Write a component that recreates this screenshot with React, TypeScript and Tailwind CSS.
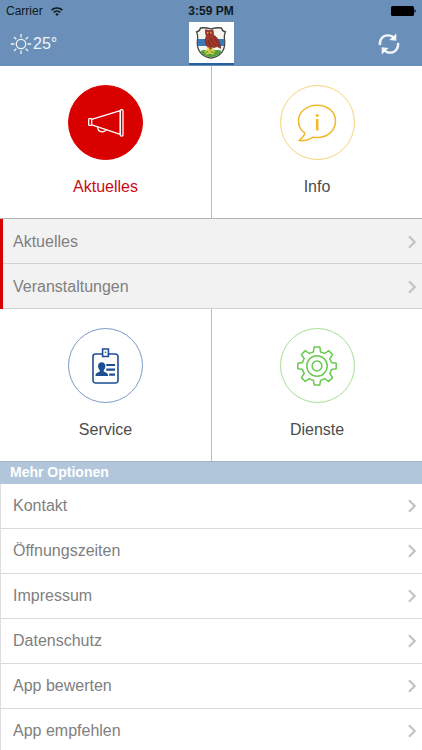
import React, { useState } from "react";

const newsLinks = ["Aktuelles", "Veranstaltungen"];

const moreLinks = [
  "Kontakt",
  "Öffnungszeiten",
  "Impressum",
  "Datenschutz",
  "App bewerten",
  "App empfehlen",
];

function Chevron() {
  return (
    <svg className="w-2 h-3.5 text-[#c4c4c8]" viewBox="0 0 8 14" fill="none" stroke="currentColor" strokeWidth={2.2}>
      <path d="M1 1.2l5.6 5.8L1 12.8" />
    </svg>
  );
}

function StatusBar() {
  return (
    <div className="grid grid-cols-3 items-center h-[22px] pl-1.5 pr-1.5 text-xs text-[#101820]">
      <div className="flex items-center gap-2">
        <span>Carrier</span>
        <svg className="w-3 h-[9px]" viewBox="0 0 12 9" fill="none" stroke="currentColor" strokeWidth={1.7}>
          <path d="M.6 3.2a7.7 7.7 0 0110.8 0M2.7 5.5a4.7 4.7 0 016.6 0" />
          <path d="M6 8.9L4.2 7.1a2.6 2.6 0 013.6 0z" fill="currentColor" stroke="none" />
        </svg>
      </div>
      <span className="text-center font-bold">3:59 PM</span>
      <svg className="justify-self-end w-[25px] h-2.5" viewBox="0 0 25 10" fill="black">
        <rect x="0" y="0" width="23" height="10" rx="1.5" />
        <path d="M23.500 3.200c1.600.2 1.600 3.400 0 3.600z" />
      </svg>
    </div>
  );
}

function SunIcon() {
  return (
    <svg className="w-[22px] h-[22px]" viewBox="0 0 22 22" fill="none" stroke="currentColor" strokeWidth={1.3}>
      <circle cx="11" cy="11" r="4.7" />
      <path d="M11 1v3.6M11 17.4V21M.8 11h3.6M17.6 11h3.6M3.9 3.9l2.4 2.4M15.7 15.7l2.4 2.4M3.9 18.1l2.4-2.4M15.7 6.3l2.4-2.4" />
    </svg>
  );
}

function RefreshIcon() {
  return (
    <svg className="w-[22px] h-[22px]" viewBox="0 0 22 22" fill="none" stroke="currentColor" strokeWidth={2.4}>
      <path d="M1.9 12.200C1.300 6.200 5 2.500 9.800 2.400c2.600-.1 4.700.9 6.200 2.700" />
      <path d="M18.300.6v7.200l-7-.8z" fill="currentColor" stroke="none" />
      <path d="M20.100 9.800c.6 6-3.100 9.700-7.900 9.800-2.600.1-4.700-.9-6.200-2.700" />
      <path d="M3.700 21.400v-7.200l7 .8z" fill="currentColor" stroke="none" />
    </svg>
  );
}

// Coat of arms: owl on a green mound over a blue and white shield
function Crest() {
  return (
    <svg className="w-8 h-8" viewBox="0 0 32 32">
      <path
        d="M5.500 1C8.500.4 12 .8 16 1.800 20 .8 23.500.4 26.500 1c.4 2 1.700 3.400 4 4-1.800 2.700-1.200 5.200-.9 8.500.9 9-3.600 15.500-13.600 17.700C6 29 1.500 22.500 2.400 13.500c.3-3.300.9-5.800-.9-8.500 2.300-.6 3.600-2 4-4z"
        fill="#f4f4f1"
        stroke="#45463f"
        strokeWidth={1.300}
      />
      <path d="M2.900 12h26.200c.3 2.600.3 4.800-.3 7H3.200c-.6-2.200-.6-4.400-.3-7z" fill="#3b78b8" />
      <path d="M5.300 24.500c2-1.500 4-1.800 6-1.200 3.500-1.200 7-1.200 9.500 0 2.300-.6 4.300-.3 5.900 1.200-2.200 3.200-5.700 5-10.700 6-5-1-8.500-2.800-10.700-6z" fill="#54a23f" />
      <path
        d="M10.800 2.600c1.700 1.200 4.600 1.300 6.900.1.900 1.900 1 3.700.5 5.400 4.200 1.700 6.400 6 7.600 13.200l-3.600-1.700-4.200 1.200-3 1.400c-4.300-3-5.800-8.200-3.600-13.400-1-2-1.200-4.100-.6-6.200z"
        fill="#a0392a"
        stroke="#6a2219"
        strokeWidth={0.700}
      />
      <path d="M17.800 9.500c2.600 2.300 4.600 5.500 6 9.700M15.500 11c1.200 3.300 3 6 5.500 8.300M13.200 13c.5 2.500 1.500 4.800 3 6.800" fill="none" stroke="#73261b" strokeWidth={0.800} />
      <circle cx="12.700" cy="5.800" r="0.900" fill="#e2a04a" />
      <circle cx="15.900" cy="5.800" r="0.900" fill="#e2a04a" />
      <path d="M13.700 6.800h1.200l-.6 1.600z" fill="#2b1c14" />
      <path d="M13.800 20.500l-.5 4M17.300 20.500l.5 4M9.800 25.300l2.600-2.600 2 2.300 2.600-2.300 2.800 2.600M11 27c2.300-1.200 5-1.200 7.500 0" fill="none" stroke="#e5d04c" strokeWidth={1.500} />
    </svg>
  );
}

function MegaphoneIcon() {
  return (
    <svg className="w-9 h-7" viewBox="0 0 36 28" fill="none" stroke="currentColor" strokeWidth={1.3} strokeLinejoin="round">
      <rect x="0.7" y="9.6" width="3" height="6.8" rx="0.8" />
      <path d="M3.7 10.3L32.3 1.7v23.6L3.7 15.8" />
      <rect x="32.3" y="0.7" width="2.7" height="26.4" rx="1" />
      <path d="M9.700 17.800c0 3.500 2 5 4.300 5 2 0 3.900-1 4-2.500" />
    </svg>
  );
}

function InfoIcon() {
  return (
    <svg className="w-10 h-[38px]" viewBox="0 0 40 38" fill="none" stroke="currentColor" strokeWidth={1.5} strokeLinejoin="round">
      <path d="M20 1.200C9.600 1.200 1.500 8 1.500 16.900c0 5 2.500 9.500 6.400 12.300-1 3.200-3 5.200-5.900 7.400 6 .6 9.700-.2 14-3.400 1.300.2 2.600.3 4 .3 10.600 0 18.500-7 18.500-16.400S30.600 1.200 20 1.200z" />
      <path d="M20.200 15v11.500" strokeWidth={2.6} />
      <circle cx="20.200" cy="11.500" r="1.6" fill="currentColor" stroke="none" />
    </svg>
  );
}

function BadgeIcon() {
  return (
    <svg className="w-[27px] h-9" viewBox="0 0 27 36" fill="none" stroke="currentColor" strokeWidth={1.6}>
      <path d="M10 6H3.500A2.500 2.500 0 001 8.500v24A2.500 2.500 0 003.500 35h20a2.500 2.500 0 002.500-2.500v-24A2.500 2.500 0 0023.500 6H17" />
      <path d="M10.600 1h5.800v7.500h-5.800z" />
      <circle cx="13.500" cy="4.200" r="0.800" fill="currentColor" stroke="none" />
      <path d="M9.700 14.300c2.400 0 3.800 1.700 3.700 4-.1 1.700-.8 3.100-1.700 3.900v1.400l3 1.300c.9.400 1.300 1.200 1.300 3.100H3.500c0-1.900.4-2.700 1.300-3.100l3-1.300v-1.400c-.9-.8-1.700-2.200-1.800-3.900-.1-2.300 1.300-4 3.700-4z" fill="currentColor" stroke="none" />
      <path d="M14.300 17h8.700M14.300 21.700h8.700M17.200 26.700H23" strokeWidth={2.2} />
    </svg>
  );
}

function GearIcon() {
  return (
    <svg className="w-10 h-10" viewBox="0 0 40 40" fill="none" stroke="currentColor" strokeWidth={1.5} strokeLinejoin="round">
      <path d="M17.200 1h5.600l.8 4.900c1.400.3 2.800.9 4.100 1.600l4-2.900 3.900 3.900-2.800 4.100c.8 1.200 1.300 2.500 1.600 3.900l4.800.7v5.600l-4.800.8c-.3 1.400-.9 2.700-1.600 3.900l2.800 4.100-3.900 3.900-4-2.900c-1.300.8-2.700 1.300-4.100 1.600l-.8 4.800h-5.600l-.8-4.800c-1.400-.3-2.800-.8-4.100-1.600l-4 2.900-3.900-3.900 2.800-4.100c-.7-1.200-1.300-2.500-1.600-3.900L.8 22.800v-5.600l4.800-.7c.3-1.400.8-2.700 1.600-3.900L4.400 8.500l3.900-3.900 4 2.900c1.300-.7 2.700-1.300 4.100-1.600z" />
      <circle cx="20" cy="20" r="10.2" />
      <circle cx="20" cy="20" r="4.9" />
    </svg>
  );
}

type TileProps = {
  label: string;
  circle: string;
  text?: string;
  className?: string;
  expanded?: boolean;
  onClick?: () => void;
  children: React.ReactNode;
};

function Tile({ label, circle, text = "text-[#4c4c4c]", className = "", expanded, onClick, children }: TileProps) {
  return (
    <button
      type="button"
      aria-expanded={expanded}
      onClick={onClick}
      className={`flex flex-col items-center pt-[19px] pb-5 cursor-pointer ${className}`}
    >
      <span className={`w-[75px] h-[75px] rounded-full border flex items-center justify-center ${circle}`}>
        {children}
      </span>
      <span className={`mt-[15px] text-base leading-[23px] ${text}`}>{label}</span>
    </button>
  );
}

export default function App() {
  const [newsOpen, setNewsOpen] = useState(true);

  return (
    <div className="h-screen overflow-y-auto [scrollbar-width:none] bg-white font-['Liberation_Sans',Arial,sans-serif]">
      <header className="bg-[#6a90b9]">
        <StatusBar />
        <div className="grid grid-cols-3 items-center h-11 px-2.5 text-white/90">
          <div className="flex items-center gap-px text-base">
            <SunIcon />
            <span>25°</span>
          </div>
          <div className="justify-self-center self-start w-[45px] h-[43px] bg-white border-b-2 border-[#265f9e] flex items-center justify-center">
            <Crest />
          </div>
          <button type="button" aria-label="Aktualisieren" className="justify-self-end mr-3 cursor-pointer">
            <RefreshIcon />
          </button>
        </div>
      </header>

      <main>
        <div className="grid grid-cols-2 border-b border-[#b5b5b5]">
          <Tile
            label="Aktuelles"
            circle="bg-[#d90000] border-[#d90000] text-white"
            text="text-[#cc0a12]"
            expanded={newsOpen}
            onClick={() => setNewsOpen(!newsOpen)}
          >
            <MegaphoneIcon />
          </Tile>
          <Tile label="Info" circle="border-[#f6d47c] text-[#f2b92c]" className="border-l border-[#bdbdbd]">
            <InfoIcon />
          </Tile>
        </div>

        {newsOpen && (
          <ul className="border-l-3 border-[#d90000] bg-[#f2f2f2]">
            {newsLinks.map((label) => (
              <li key={label} className="border-b border-[#d2d2d2]">
                <a href="#" className="flex items-center justify-between h-11 pt-0.5 pl-2.5 pr-1.5 text-base text-[#808080]">
                  {label}
                  <Chevron />
                </a>
              </li>
            ))}
          </ul>
        )}

        <div className="grid grid-cols-2">
          <Tile label="Service" circle="border-[#7c9ac4] text-[#1d4f93]">
            <BadgeIcon />
          </Tile>
          <Tile label="Dienste" circle="border-[#a5df96] text-[#68c94d]" className="border-l border-[#bdbdbd]">
            <GearIcon />
          </Tile>
        </div>

        <h2 className="h-[23px] pl-2.5 border-t border-[#a9b4c0] bg-[#b1c6db] text-sm leading-5 font-bold text-white">
          Mehr Optionen
        </h2>
        <ul>
          {moreLinks.map((label) => (
            <li key={label} className="border-b border-[#dadada]">
              <a href="#" className="flex items-center justify-between h-11 border-l border-[#dedede] pl-3 pr-1.5 text-base text-[#808080]">
                {label}
                <Chevron />
              </a>
            </li>
          ))}
        </ul>
      </main>
    </div>
  );
}
